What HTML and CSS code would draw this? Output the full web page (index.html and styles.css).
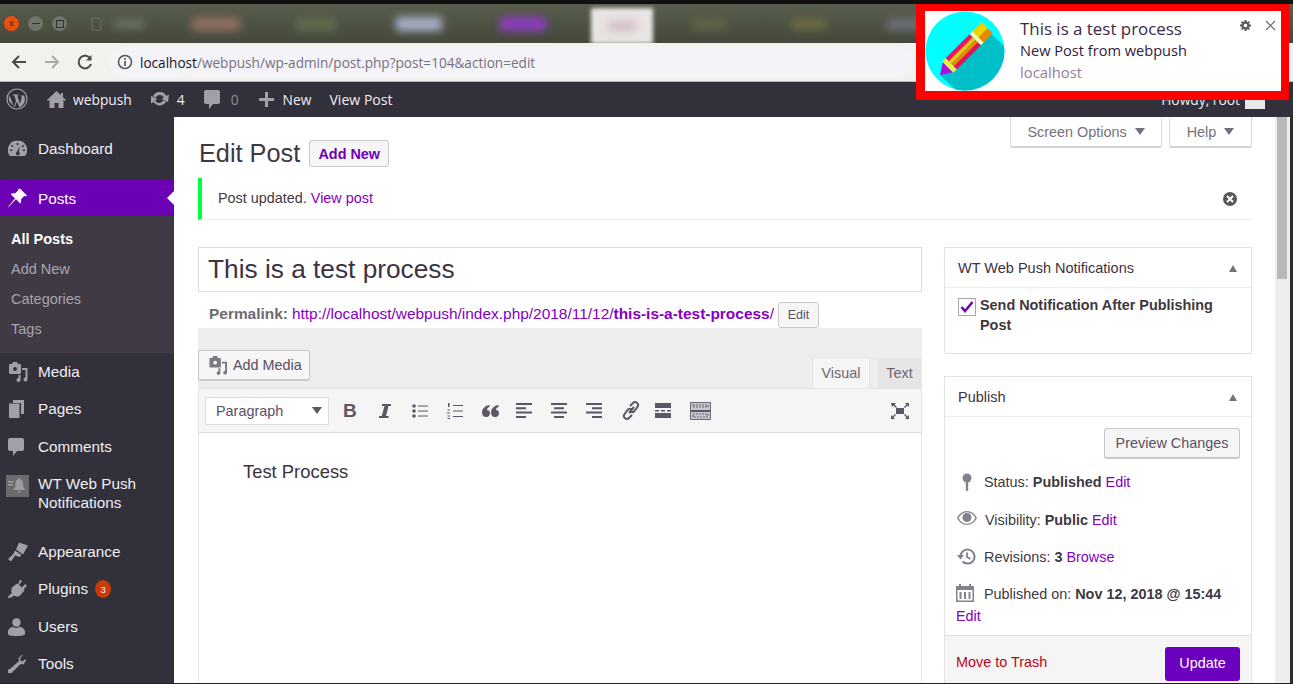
FILE: index.html
```html
<!DOCTYPE html>
<html lang="en">
<head>
    <meta charset="UTF-8">
    <title>Edit Post - webpush</title>
    <link rel="stylesheet" href="styles.css">
</head>
<body>
<div class="window">
    <div class="tabbar">
        <div class="win-btns">
            <span class="win-btn close">x</span>
            <span class="win-btn"><i class="dash"></i></span>
            <span class="win-btn"><i class="square"></i></span>
        </div>
        <svg class="doc-icon" width="11" height="14" viewBox="0 0 11 14"><path d="M1 1h6l3 3v9H1z" fill="none" stroke="#6b7060"/></svg>
        <div class="tab-blurs">
            <span class="blur b1"></span><span class="blur b2"></span><span class="blur b3"></span>
            <span class="blur b4"></span><span class="blur b5"></span>
        </div>
        <div class="tab-active"><span class="blur b6"></span></div>
        <div class="tab-blurs right">
            <span class="blur b7"></span><span class="blur b8"></span><span class="blur b9"></span>
        </div>
    </div>
    <div class="toolbar">
        <svg class="nav" width="18" height="18" viewBox="0 0 18 18"><path d="M16 9H3M9 3L3 9l6 6" fill="none" stroke="#4a4a4a" stroke-width="2"/></svg>
        <svg class="nav" width="18" height="18" viewBox="0 0 18 18"><path d="M2 9h13M9 3l6 6-6 6" fill="none" stroke="#a9a9a9" stroke-width="2"/></svg>
        <svg class="nav" width="18" height="18" viewBox="0 0 18 18"><path d="M14.500 6A6.300 6.300 0 1 0 15 11" fill="none" stroke="#4a4a4a" stroke-width="2"/><path d="M15.500 2v5.500h-5.500z" fill="#4a4a4a"/></svg>
        <div class="urlbar">
            <svg width="16" height="16" viewBox="0 0 16 16"><circle cx="8" cy="8" r="6.500" fill="none" stroke="#555" stroke-width="1.500"/><rect x="7.200" y="7" width="1.600" height="5" fill="#555"/><rect x="7.200" y="4" width="1.600" height="1.800" fill="#555"/></svg>
            <span class="url"><b>localhost</b>/webpush/wp-admin/post.php?post=104&amp;action=edit</span>
        </div>
    </div>

    <div class="adminbar">
        <svg class="wp-logo" width="22" height="22" viewBox="0 0 22 22">
            <circle cx="11" cy="11" r="10" fill="none" stroke="#a29fa8" stroke-width="1.200"/>
            <path d="M3.500 7.500L8 19l2-6-1.700-5.500H7V6.500h5.500v1h-1.300L14 16l1.500-5c.5-1.800-.5-3-1-3.500h3.500c1.500 3 1 6-.5 8.500l-3 3-1 .5L11 13.500 8.800 19.500 3 13c-.5-2 0-4 .5-5.500z" fill="#a29fa8"/>
        </svg>
        <span class="ab-item home">
            <svg width="19" height="19" viewBox="0 0 19 19"><path d="M9.500 1L0 10l1 1 1.500-1.300V18h5v-5h4v5h5V9.700L18 11l1-1-3-2.800V3h-2v2.300z" fill="#a29fa8"/></svg>
            webpush
        </span>
        <span class="ab-item updates">
            <svg width="20" height="20" viewBox="0 0 20 20"><path d="M10 3a7 7 0 0 1 6.300 4L19 5.500 18 13l-6.500-3 2.400-1.300A4.500 4.500 0 0 0 5.800 8.500L3 7.500A7 7 0 0 1 10 3zM1 7l6.500 3-2.400 1.300a4.500 4.500 0 0 0 8.100.2l2.800 1A7 7 0 0 1 3.700 13L1 14.500z" fill="#a29fa8"/></svg>
            4
        </span>
        <span class="ab-item comments">
            <svg width="16" height="19" viewBox="0 0 16 19"><path d="M2 0h12a2 2 0 0 1 2 2v10a2 2 0 0 1-2 2H9l-4 5v-5H2a2 2 0 0 1-2-2V2a2 2 0 0 1 2-2z" fill="#a29fa8"/></svg>
            <span class="muted">0</span>
        </span>
        <span class="ab-item new">
            <svg width="15" height="15" viewBox="0 0 15 15"><path d="M6 0h3v6h6v3H9v6H6V9H0V6h6z" fill="#a29fa8"/></svg>
            New
        </span>
        <span class="ab-item view">View Post</span>
        <span class="howdy">Howdy, root <i class="avatar"></i></span>
    </div>

    <div class="wp-body">
        <nav class="sidebar">
            <a class="menu-item first">
                <svg width="19" height="17" viewBox="0 0 19 17"><path d="M9.500 0A9.500 9.500 0 0 0 2 15.500h15A9.500 9.500 0 0 0 9.500 0zM8.700 2.500h1.600v2H8.700zM4 4.300l1.400 1.400-1.100 1.100-1.400-1.400zm11 0l1.100 1.100-1.400 1.400-1.100-1.100zM2 9h2.200v1.600H2zm12.800 0H17v1.600h-2.200zM11.800 5.500l-1 6a1.800 1.800 0 1 1-2 0z" fill="#a29fa8" fill-rule="evenodd"/></svg>
                Dashboard
            </a>
            <a class="menu-item current">
                <svg width="19" height="19" viewBox="0 0 19 19"><path d="M12 0l7 7-1.500 1-1-.7-3.500 3.500c.5 1.800.2 3.300-.8 4.300L8 10.800 1 18l-1 1 .5-1.300L7 10 2.700 5.800c1-1 2.500-1.300 4.300-.8l3.500-3.500-.7-1z" fill="#fff"/></svg>
                Posts
            </a>
            <div class="submenu">
                <a class="sub-item active">All Posts</a>
                <a class="sub-item">Add New</a>
                <a class="sub-item">Categories</a>
                <a class="sub-item">Tags</a>
            </div>
            <a class="menu-item">
                <svg width="20" height="20" viewBox="0 0 20 20"><path d="M2 2h2l1-2h4l1 2h2a1 1 0 0 1 1 1v8a1 1 0 0 1-1 1H2a1 1 0 0 1-1-1V3a1 1 0 0 1 1-1zm5 3a2 2 0 1 0 0 4 2 2 0 0 0 0-4z" fill="#a29fa8" fill-rule="evenodd"/><path d="M14 6h5.500v11.500a2 2 0 1 1-2-2V8h-3.500zM12.500 13v5a2 2 0 1 1-2-2v-3z" fill="#a29fa8"/></svg>
                Media
            </a>
            <a class="menu-item">
                <svg width="16" height="18" viewBox="0 0 16 18"><path d="M5 0h11v14h-3V3H5z" fill="#a29fa8"/><path d="M1 3.500h10.500V18H1z" fill="#a29fa8"/></svg>
                Pages
            </a>
            <a class="menu-item">
                <svg width="16" height="18" viewBox="0 0 16 18"><path d="M2 0h12a2 2 0 0 1 2 2v9a2 2 0 0 1-2 2H9l-4 5v-5H2a2 2 0 0 1-2-2V2a2 2 0 0 1 2-2z" fill="#a29fa8"/></svg>
                Comments
            </a>
            <a class="menu-item wt">
                <span class="wt-icon"><svg width="19" height="15" viewBox="0 0 19 15"><path d="M11 0c.8 0 1.300.6 1.300 1.300C14.500 2 15 4 15 6c0 3 1.500 5 2.500 6H5c1-1 2.500-3 2.500-6 0-2 .5-4 2.200-4.700C9.700.6 10.200 0 11 0zM9.500 13h3a1.500 1.500 0 0 1-3 0zM0 3h6v1.500H0zm0 3h5v1.500H0z" fill="#9d9ca1"/></svg></span>
                <span>WT Web Push<br>Notifications</span>
            </a>
            <a class="menu-item">
                <svg width="20" height="19" viewBox="0 0 20 19"><path d="M11 0l9 3-5 9-7-5zM7 8l6.500 4.500-2 2-4.500-1.500-4 6-3-2.500 5-4.500z" fill="#a29fa8"/></svg>
                Appearance
            </a>
            <a class="menu-item">
                <svg width="19" height="19" viewBox="0 0 19 19"><path d="M12 0l2 1.500-3 4 3 2.500 3-3.500 2 1.500-3.500 4 1 1-5 5.500c-2 1-4 .5-5-.5L3 18l-3 1 .5-2.500 3.500-3c-1-1-1-3 0-5.500l5-4 1 1z" fill="#a29fa8"/></svg>
                Plugins <span class="count">3</span>
            </a>
            <a class="menu-item">
                <svg width="17" height="18" viewBox="0 0 17 18"><circle cx="8.500" cy="4.500" r="4.200" fill="#a29fa8"/><path d="M0 14c0-3 3-5 5-5.200 1 1.400 5.500 1.400 6.500 0C14 9 17 11 17 14v2.500c-3 2-14 2-17 0z" fill="#a29fa8"/></svg>
                Users
            </a>
            <a class="menu-item">
                <svg width="18" height="18" viewBox="0 0 18 18"><path d="M14 0l-3.500 3 .5 3L2 14a2.500 2.500 0 1 0 2.500 3l8-8 3 .5L18 5.500 17.500 4l-3 2.500-2.500-1.500.5-2.500L15 .5z" fill="#a29fa8"/></svg>
                Tools
            </a>
        </nav>

        <main class="content">
            <div class="head-row">
                <div class="heading">
                    <h1>Edit Post</h1>
                    <a class="btn add-new">Add New</a>
                </div>
                <div class="screen-tabs">
                    <span class="screen-tab opts">Screen Options <i class="arrow"></i></span>
                    <span class="screen-tab help">Help <i class="arrow"></i></span>
                </div>
            </div>

            <div class="notice">
                <p>Post updated. <a>View post</a></p>
                <svg width="16" height="16" viewBox="0 0 16 16"><circle cx="8" cy="8" r="7" fill="#5a5560"/><path d="M5 5l6 6M11 5l-6 6" stroke="#fff" stroke-width="2"/></svg>
            </div>

            <div class="columns">
                <div class="col-main">
                    <div class="title-input">This is a test process</div>
                    <div class="permalink">
                        <b>Permalink:</b>
                        <a>http://localhost/webpush/index.php/2018/11/12/<strong>this-is-a-test-process</strong>/</a>
                        <span class="btn edit-slug">Edit</span>
                    </div>
                    <div class="editor">
                        <div class="editor-top">
                            <span class="btn add-media">
                                <svg width="20" height="19" viewBox="0 0 20 20"><path d="M2 2h2l1-2h4l1 2h2a1 1 0 0 1 1 1v8a1 1 0 0 1-1 1H2a1 1 0 0 1-1-1V3a1 1 0 0 1 1-1zm5 3a2 2 0 1 0 0 4 2 2 0 0 0 0-4z" fill="#7d7883" fill-rule="evenodd"/><path d="M14 6h5.500v11.500a2 2 0 1 1-2-2V8h-3.500zM12.500 13v5a2 2 0 1 1-2-2v-3z" fill="#7d7883"/></svg>
                                Add Media
                            </span>
                            <div class="editor-tabs">
                                <span class="etab on">Visual</span>
                                <span class="etab">Text</span>
                            </div>
                        </div>
                        <div class="mce-bar">
                            <span class="format-select">Paragraph <i class="arrow"></i></span>
                            <span class="mce mce-b">B</span>
                            <span class="mce"><svg width="14" height="16" viewBox="0 0 14 16"><path d="M4 1h9v2h-2.500L8 13h2.500v2H1v-2h2.800L6.500 3H4z" fill="#5d5667"/></svg></span>
                            <span class="mce"><svg width="16" height="14" viewBox="0 0 16 14"><circle cx="2" cy="2" r="1.800" fill="#5d5667"/><circle cx="2" cy="7" r="1.800" fill="#5d5667"/><circle cx="2" cy="12" r="1.800" fill="#5d5667"/><path d="M6 1.500h10v1H6zm0 5h10v1H6zm0 5h10v1H6z" fill="#5d5667"/></svg></span>
                            <span class="mce"><svg width="16" height="16" viewBox="0 0 16 16"><path d="M1 0h1.500v4H1zM.5 6.500h2.500v1H.5zM0 9.500h3v1H0zM.5 12.500h2.500v1H.5zM.5 15h2.500v1H.5zM6 2h10v1H6zm0 5.500h10v1H6zm0 5.500h10v1H6z" fill="#5d5667"/></svg></span>
                            <span class="mce"><svg width="17" height="12" viewBox="0 0 17 12"><path d="M7.500 0v2C5.500 2.500 5 4 5 5c2 0 3 1.500 3 3.200A3.700 3.700 0 0 1 4 12C1.500 12 0 10 0 7.500 0 3.500 3.500.5 7.500 0zM16.500 0v2c-2 .5-2.500 2-2.500 3 2 0 3 1.500 3 3.200A3.700 3.700 0 0 1 13 12c-2.500 0-4-2-4-4.500C9 3.500 12.500.5 16.500 0z" fill="#5d5667"/></svg></span>
                            <span class="mce"><svg width="16" height="15" viewBox="0 0 16 15"><path d="M0 0h16v2H0zm0 4.300h10v2H0zm0 4.300h16v2H0zm0 4.400h10v2H0z" fill="#5d5667"/></svg></span>
                            <span class="mce"><svg width="16" height="15" viewBox="0 0 16 15"><path d="M0 0h16v2H0zm3 4.300h10v2H3zm-3 4.300h16v2H0zm3 4.400h10v2H3z" fill="#5d5667"/></svg></span>
                            <span class="mce"><svg width="16" height="15" viewBox="0 0 16 15"><path d="M0 0h16v2H0zm6 4.300h10v2H6zm-6 4.300h16v2H0zm6 4.400h10v2H6z" fill="#5d5667"/></svg></span>
                            <span class="mce"><svg width="20" height="19" viewBox="0 0 20 19"><path d="M8 12l5-6M9 5l3-3a3 3 0 0 1 5 3l-3.500 5a3 3 0 0 1-4 .5M11 14l-3 3a3 3 0 0 1-5-3l3.500-5a3 3 0 0 1 4-.5" fill="none" stroke="#5d5667" stroke-width="2"/></svg></span>
                            <span class="mce"><svg width="16" height="15" viewBox="0 0 16 15"><path d="M0 0h16v5H0zM0 10h16v5H0zM0 7h4v1.500H0zm6 0h4v1.500H6zm6 0h4v1.500h-4z" fill="#5d5667"/></svg></span>
                            <span class="mce"><svg width="21" height="18" viewBox="0 0 21 18"><path d="M.5.500h20v17H.5z" fill="#c9c7cf" stroke="#6d6873"/><path d="M1 8h19v2H1z" fill="#5d5667"/><path d="M3 3h15v2H3zM3 12h15v3H3z" fill="none" stroke="#6d6873" stroke-width="1.200" stroke-dasharray="2 1"/></svg></span>
                            <svg class="fullscreen" width="18" height="16" viewBox="0 0 18 16"><path d="M5 5h8v6H5zM0 0h5L3.500 1.500 6 4 5 5 2.500 2.500 1 4zM18 0v4l-1.500-1.500L14 5l-1-1 2.500-2.500L14 0zM0 16v-4l1.500 1.500L4 11l1 1-2.500 2.500L4 16zM18 16h-4l1.500-1.500L13 12l1-1 2.500 2.500L18 12z" fill="#5d5667"/></svg>
                        </div>
                        <div class="editor-body">Test Process</div>
                    </div>
                </div>

                <aside class="col-side">
                    <section class="box">
                        <h2>WT Web Push Notifications <i class="up"></i></h2>
                        <div class="box-inner push">
                            <span class="check"><svg width="14" height="12" viewBox="0 0 14 12"><path d="M1.500 6l3.500 4L12.500 1" fill="none" stroke="#6c00b5" stroke-width="2.500"/></svg></span>
                            <b>Send Notification After Publishing Post</b>
                        </div>
                    </section>
                    <section class="box">
                        <h2>Publish <i class="up"></i></h2>
                        <div class="preview-row"><span class="btn preview">Preview Changes</span></div>
                        <div class="pub-row status">
                            <svg width="10" height="18" viewBox="0 0 10 18"><circle cx="5" cy="5" r="4.500" fill="#85808c"/><rect x="3.800" y="8" width="2.400" height="10" rx="1" fill="#85808c"/></svg>
                            <span>Status: <b>Published</b> <a>Edit</a></span>
                        </div>
                        <div class="pub-row vis">
                            <svg width="20" height="14" viewBox="0 0 20 14"><path d="M10 0c4.500 0 8 3 10 7-2 4-5.500 7-10 7S2 11 0 7c2-4 5.500-7 10-7zm0 1.200C6.300 1.200 3.500 3.500 1.600 7c1.900 3.500 4.700 5.800 8.400 5.800s6.500-2.300 8.400-5.800c-1.900-3.500-4.700-5.800-8.400-5.800z" fill="#85808c"/><circle cx="10" cy="6.500" r="4.500" fill="#85808c"/></svg>
                            <span>Visibility: <b>Public</b> <a>Edit</a></span>
                        </div>
                        <div class="pub-row rev">
                            <svg width="19" height="18" viewBox="0 0 19 18"><path d="M3.500 8.500a7 7 0 1 1 2 5" fill="none" stroke="#85808c" stroke-width="2"/><path d="M0 7h7l-3.500 4.500z" fill="#85808c"/><path d="M10 4.500V9l3.500 2" fill="none" stroke="#85808c" stroke-width="1.800"/></svg>
                            <span>Revisions: <b>3</b> <a>Browse</a></span>
                        </div>
                        <div class="pub-row date">
                            <svg width="18" height="18" viewBox="0 0 18 18"><path d="M0 2h3V0h2v2h8V0h2v2h3v16H0zm1.500 4v10.500h15V6z" fill="#85808c" fill-rule="evenodd"/><path d="M3.500 8h2v7h-2zm4.500 0h2v7H8zm4.500 0h2v7h-2z" fill="#85808c"/></svg>
                            <span>Published on: <b>Nov 12, 2018 @ 15:44</b><br><a>Edit</a></span>
                        </div>
                        <div class="pub-actions">
                            <a class="trash">Move to Trash</a>
                            <span class="update">Update</span>
                        </div>
                    </section>
                </aside>
            </div>
        </main>

        <div class="scrollbar"><span class="thumb"></span></div>
    </div>

    <!-- chrome notification, outlined in red on top of everything -->
    <div class="notification">
        <svg class="note-icon" width="80" height="80" viewBox="0 0 80 80">
            <defs><clipPath id="disc"><circle cx="40" cy="40" r="39.500"/></clipPath></defs>
            <circle cx="40" cy="40" r="39.500" fill="#00ffff"/>
            <path d="M15 64L60 17 80 36 80 80 32 80z" fill="#00bfc9" clip-path="url(#disc)"/>
            <g transform="translate(15 64) rotate(-45) scale(1 .88)">
                <path d="M0 0l11-8v16z" fill="#a80fe0"/>
                <rect x="11" y="-9" width="5" height="18" fill="#e7f03a"/>
                <rect x="16" y="-9" width="34" height="5" fill="#ee1566"/>
                <rect x="16" y="-4" width="34" height="4" fill="#f7c400"/>
                <rect x="16" y="0" width="34" height="4" fill="#e88a00"/>
                <rect x="16" y="4" width="34" height="5" fill="#e0125c"/>
                <rect x="50" y="-9" width="4" height="18" fill="#fdf6b0"/>
                <rect x="54" y="-9" width="13" height="10" fill="#f2d000"/>
                <rect x="54" y="1" width="13" height="8" fill="#e88a00"/>
            </g>
        </svg>
        <div class="note-text">
            <div class="note-title">This is a test process</div>
            <div class="note-msg">New Post from webpush</div>
            <div class="note-src">localhost</div>
        </div>
        <svg class="note-gear" width="11" height="11" viewBox="0 0 12 12"><path d="M5 0h2l.3 1.600 1.200.5L9.900 1.200l1 1-1 1.400.5 1.200L12 5v2l-1.600.3-.5 1.200.9 1.400-1 1-1.400-.9-1.200.5L7 12H5l-.3-1.600-1.200-.5-1.400.9-1-1 .9-1.400-.5-1.200L0 7V5l1.500-.3.5-1.200-.9-1.300 1-1 1.400.9 1.200-.5zM6 4a2 2 0 1 0 0 4 2 2 0 0 0 0-4z" fill="#5f5f5f" fill-rule="evenodd"/></svg>
        <svg class="note-close" width="11" height="11" viewBox="0 0 11 11"><path d="M1 1l9 9M10 1l-9 9" stroke="#6a6a6a" stroke-width="1.200"/></svg>
    </div>
</div>
</body>
</html>
```

FILE: styles.css
```css
html, body {
    margin: 0;
    padding: 0;
    height: 100%;
    overflow: hidden;
}
body {
    font-family: "Liberation Sans", Arial, sans-serif;
    font-size: 14.4px;
    color: #40383f;
    background: #111;
}
a {
    color: #8500c2;
    text-decoration: none;
}
.window {
    position: relative;
    height: 684px;
    box-sizing: border-box;
    padding-top: 4px;
    border-bottom: 1px solid #222;
    display: flex;
    flex-direction: column;
    overflow: hidden;
}

/* browser chrome */
.tabbar {
    height: 39px;
    flex: none;
    background: linear-gradient(#585e4c, #43483b);
    display: flex;
    align-items: center;
    overflow: hidden;
}
.win-btns {
    display: flex;
    gap: 7px;
    padding-left: 3px;
}
.win-btn {
    width: 17px;
    height: 17px;
    box-sizing: border-box;
    border-radius: 50%;
    background: #70756a;
    border: 1px solid #4a4e42;
    display: flex;
    align-items: center;
    justify-content: center;
    font-size: 9px;
    line-height: 1;
    color: #3b2a10;
}
.win-btn.close {
    background: #e8500f;
}
.win-btn .dash {
    width: 8px;
    height: 1px;
    background: #333;
}
.win-btn .square {
    width: 6px;
    height: 6px;
    border: 1px solid #333;
}
.doc-icon {
    margin-left: 23px;
}
.tab-blurs {
    display: flex;
    align-items: center;
    height: 100%;
}
.blur {
    display: block;
    filter: blur(4px);
    flex: none;
}
.b1 { width: 30px; height: 8px; margin-left: 12px; background: #70756a; }
.b2 { width: 48px; height: 14px; margin-left: 48px; background: #8d6d62; }
.b3 { width: 40px; height: 14px; margin-left: 56px; background: #5f6a4d; }
.b4 { width: 46px; height: 14px; margin-left: 60px; background: #aab0c8; }
.b5 { width: 46px; height: 14px; margin-left: 58px; background: #8e3cc0; }
.tab-active {
    width: 62px;
    height: 36px;
    margin: 5px 0 0 45px;
    background: #e9e5e4;
    filter: blur(2px);
    flex: none;
    display: flex;
    align-items: center;
    justify-content: center;
}
.b6 { width: 28px; height: 8px; background: #cdb0b8; }
.b7 { width: 34px; height: 12px; margin-left: 39px; background: #5f6448; }
.b8 { width: 34px; height: 12px; margin-left: 66px; background: #6d6a45; }
.b9 { width: 34px; height: 12px; margin-left: 61px; background: #6d6f75; }
.toolbar {
    height: 38px;
    flex: none;
    background: #f1f2ee;
    border-bottom: 1px solid #b9b9b6;
    display: flex;
    align-items: center;
    padding-left: 10px;
    gap: 15px;
}
.urlbar {
    flex: 1;
    height: 30px;
    margin-right: 380px;
    padding-left: 8px;
    border-radius: 15px;
    background: #f3f3f8;
    display: flex;
    align-items: center;
    gap: 7px;
}
.url {
    font-family: "Open Sans", sans-serif;
    font-size: 13.600px;
    color: #77707f;
}
.url b {
    font-weight: 400;
    color: #20122c;
}

/* wp admin bar */
.adminbar {
    height: 35px;
    box-sizing: border-box;
    padding-bottom: 1px;
    flex: none;
    background: #32303a;
    color: #f0eef2;
    display: flex;
    align-items: center;
    font-family: "Open Sans", sans-serif;
    font-size: 13.800px;
    position: relative;
}
.wp-logo {
    margin-left: 6px;
}
.ab-item {
    display: flex;
    align-items: center;
    gap: 7px;
}
.home { margin-left: 19px; }
.updates { margin-left: 18px; }
.comments { margin-left: 19px; gap: 11px; }
.new { margin-left: 20px; gap: 9px; }
.view { margin-left: 18px; font-size: 14.100px; }
.muted { color: #8f8b94; }
.howdy {
    margin-left: auto;
    margin-right: 28px;
    display: flex;
    align-items: center;
    gap: 5px;
}
.avatar {
    width: 20px;
    height: 20px;
    background: #e8e8e8;
}

/* main area */
.wp-body {
    flex: 1;
    display: flex;
    min-height: 0;
    background: #fff;
}
.sidebar {
    width: 174px;
    flex: none;
    background: #32303a;
    padding-top: 14px;
    font-size: 15.300px;
    color: #f0eef2;
    box-sizing: border-box;
}
.menu-item {
    height: 37.500px;
    display: flex;
    align-items: center;
    padding-left: 38px;
    position: relative;
    color: #f0eef2;
}
.menu-item > svg, .wt-icon {
    position: absolute;
    left: 8px;
    top: 50%;
    transform: translateY(-50%);
}
.menu-item.first {
    height: 36px;
    margin-bottom: 13px;
}
.menu-item.current {
    height: 36px;
    box-sizing: border-box;
    padding-top: 1px;
    background: #6c00b5;
    color: #fff;
}
.menu-item.current::after {
    content: "";
    position: absolute;
    right: 0;
    top: 11px;
    border: 7px solid transparent;
    border-right-color: #fff;
    border-left: 0;
}
.menu-item.wt {
    height: 67.600px;
    align-items: flex-start;
    padding-top: 8px;
    line-height: 19px;
    box-sizing: border-box;
}
.wt-icon {
    top: 9px;
    left: 6px;
    transform: none;
    width: 23px;
    height: 22px;
    background: #6b6a6e;
    display: flex;
    align-items: center;
    justify-content: center;
}
.count {
    display: inline-flex;
    align-items: center;
    justify-content: center;
    width: 16px;
    height: 18px;
    margin-left: 7px;
    border-radius: 50%;
    background: #ca3a06;
    font-size: 9.500px;
    color: #fff;
}
.submenu {
    height: 137px;
    box-sizing: border-box;
    padding: 8px 0 0 11px;
    background: #3f3a44;
    font-size: 14.500px;
}
.sub-item {
    display: block;
    height: 30px;
    line-height: 30px;
    color: #a9a5ad;
}
.sub-item.active {
    color: #fff;
    font-weight: 700;
}

.content {
    flex: 1;
    min-width: 0;
    padding: 0 23px 0 24px;
}
.head-row {
    display: flex;
    justify-content: space-between;
    align-items: flex-start;
    height: 61px;
}
.heading {
    display: flex;
    align-items: center;
    gap: 9px;
    padding-top: 21px;
}
h1 {
    margin: 0;
    font-size: 25.300px;
    font-weight: 400;
    line-height: 30px;
    padding-left: 1px;
}
.btn {
    display: inline-flex;
    align-items: center;
    box-sizing: border-box;
    background: #f6f6f6;
    border: 1px solid #c9c9c9;
    border-radius: 3px;
    color: #5a5064;
}
.add-new {
    height: 27px;
    width: 80px;
    justify-content: center;
    margin-top: 1px;
    font-weight: 700;
    color: #6c00b5;
}
.screen-tabs {
    display: flex;
    gap: 7px;
}
.screen-tab {
    height: 31px;
    box-sizing: border-box;
    display: flex;
    align-items: center;
    justify-content: center;
    gap: 8px;
    background: #fff;
    border: 1px solid #dcdcdc;
    border-top: 0;
    border-bottom: 2px solid #d2d2d2;
    border-radius: 0 0 3px 3px;
    color: #75707b;
}
.opts { width: 152px; }
.help { width: 83px; }
.arrow {
    display: block;
    border: 5px solid transparent;
    border-top: 7px solid #75707b;
    border-bottom: 0;
}
.notice {
    height: 42px;
    box-sizing: border-box;
    border-left: 4px solid #00ff40;
    border-bottom: 1px solid #eee;
    padding: 0 14px 0 16px;
    display: flex;
    align-items: center;
    justify-content: space-between;
    margin-bottom: 27px;
}
.notice p {
    margin: 0 0 2px;
}
.columns {
    display: flex;
    gap: 22px;
    align-items: flex-start;
}
.col-main {
    width: 724px;
    flex: none;
}
.col-side {
    flex: 1;
    min-width: 0;
}
.title-input {
    height: 45px;
    box-sizing: border-box;
    border: 1px solid #dcdcdc;
    padding-left: 9px;
    line-height: 43px;
    font-size: 26.250px;
    color: #3d3340;
}
.permalink {
    height: 36px;
    display: flex;
    align-items: center;
    padding: 8px 0 0 11px;
    gap: 4px;
    box-sizing: border-box;
    white-space: nowrap;
    font-size: 15.450px;
}
.permalink b {
    color: #6d6a70;
}
.edit-slug {
    height: 26px;
    width: 41px;
    justify-content: center;
    font-size: 12.500px;
    margin-top: 1px;
}
.editor {
    background: #eeeded;
}
.editor-top {
    height: 60px;
    display: flex;
    justify-content: space-between;
    align-items: flex-end;
    position: relative;
}
.add-media {
    height: 31px;
    width: 112px;
    gap: 5px;
    padding-left: 9px;
    margin-bottom: 7px;
    border-bottom-width: 2px;
}
.editor-tabs {
    display: flex;
    gap: 7px;
}
.etab {
    height: 31px;
    width: 45px;
    line-height: 31px;
    text-align: center;
    background: #e6e5e5;
    color: #6d6673;
    border: 1px solid #ebebeb;
    border-bottom: 0;
    box-sizing: border-box;
}
.etab.on {
    width: 58px;
    background: #f5f5f5;
    border-color: #e2e2e2;
}
.mce-bar {
    height: 45px;
    box-sizing: border-box;
    background: #f5f5f5;
    border-top: 1px solid #e5e5e5;
    border-bottom: 1px solid #dcdcdc;
    display: flex;
    align-items: center;
    padding-left: 6px;
    border-left: 1px solid #e5e5e5;
    border-right: 1px solid #e5e5e5;
}
.format-select {
    width: 124px;
    height: 28px;
    box-sizing: border-box;
    border: 1px solid #dcdcdc;
    background: #fff;
    display: flex;
    align-items: center;
    justify-content: space-between;
    padding: 0 6px 0 10px;
    color: #5a5064;
    margin-right: 14px;
}
.format-select .arrow {
    border-top-color: #5d5667;
}
.mce {
    width: 34.700px;
    flex: none;
    display: flex;
    align-items: center;
}
.mce-b {
    font-size: 19px;
    line-height: 24px;
    font-weight: 700;
    color: #5d5667;
}
.fullscreen {
    margin: 0 12px 0 auto;
}
.editor-body {
    height: 260px;
    background: #fff;
    border-left: 1px solid #e5e5e5;
    border-right: 1px solid #e5e5e5;
    padding: 28px 0 0 44px;
    font-size: 18.400px;
    line-height: 22px;
    color: #3d3340;
}

/* side boxes */
.box {
    border: 1px solid #e2e2e2;
    margin-bottom: 22px;
    background: #fff;
}
.box h2 {
    margin: 0;
    height: 40px;
    box-sizing: border-box;
    border-bottom: 1px solid #ececec;
    padding: 0 13px;
    display: flex;
    align-items: center;
    justify-content: space-between;
    font-size: 14.500px;
    font-weight: 400;
    color: #3d3340;
}
.up {
    display: block;
    border: 4.500px solid transparent;
    border-bottom: 7px solid #75707b;
    border-top: 0;
    margin: 2px 1px 0 0;
}
.box-inner.push {
    height: 65px;
    box-sizing: border-box;
    padding: 7px 20px 0 13px;
    display: flex;
    gap: 4px;
    line-height: 20px;
}
.check {
    width: 18px;
    height: 18px;
    flex: none;
    margin-top: 3px;
    box-sizing: border-box;
    border: 1px solid #aaa5b5;
    display: flex;
    align-items: center;
    justify-content: center;
}
.preview-row {
    display: flex;
    justify-content: flex-end;
    padding: 11px 11px 0;
}
.preview {
    height: 31px;
    width: 136px;
    justify-content: center;
    border-bottom-width: 2px;
}
.pub-row {
    display: flex;
    gap: 8px;
    padding-left: 12px;
    line-height: 22px;
}
.pub-row > svg {
    flex: none;
    margin-top: 2px;
}
.pub-row.status { margin-top: 12px; padding-left: 17px; gap: 12px; }
.pub-row.vis { margin-top: 16px; }
.pub-row.rev { margin-top: 15px; }
.pub-row.date { margin-top: 15px; position: relative; display: block; padding-left: 11px; }
.pub-row.date > svg { margin: 0 6px -3px 0; }
.pub-actions {
    margin-top: 8px;
    height: 48px;
    background: #f5f5f5;
    border-top: 1px solid #dedede;
    display: flex;
    align-items: flex-start;
    justify-content: space-between;
    padding: 11px 11px 0;
}
.trash {
    color: #c4001a;
    margin-top: 7px;
}
.update {
    width: 75px;
    height: 34px;
    line-height: 33px;
    text-align: center;
    border-radius: 3px;
    background: #6c00bf;
    color: #fff;
}
.scrollbar {
    width: 15px;
    flex: none;
    background: #eeeeee;
    margin-right: 3px;
    box-shadow: 3px 0 0 #2d3029;
    padding: 0 3px 0 2px;
    box-sizing: border-box;
}
.thumb {
    display: block;
    height: 162px;
    background: #b9b9b9;
}

/* notification overlay */
.notification {
    position: absolute;
    left: 916px;
    top: 4px;
    width: 373px;
    height: 96px;
    box-sizing: border-box;
    border: solid #ff0000;
    border-width: 7px 8px 9px 9px;
    background: #fff;
    display: flex;
    font-family: "Open Sans", sans-serif;
}
.note-icon {
    flex: none;
}
.note-text {
    margin-left: 15px;
    padding-top: 7px;
}
.note-title {
    font-size: 16.900px;
    line-height: 21px;
    color: #3a2a44;
}
.note-msg {
    font-size: 14.600px;
    font-weight: 500;
    line-height: 23px;
    color: #32203f;
}
.note-src {
    font-size: 14.800px;
    line-height: 21px;
    color: #9180a0;
}
.note-gear {
    position: absolute;
    right: 30px;
    top: 9px;
}
.note-close {
    position: absolute;
    right: 5px;
    top: 9px;
}
```
